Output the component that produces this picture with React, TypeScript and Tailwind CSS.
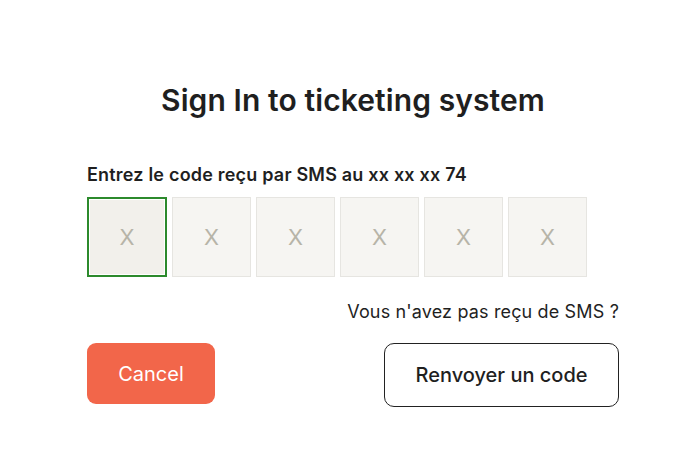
const digits = ['X', 'X', 'X', 'X', 'X', 'X'];

export default function App() {
  return (
    <div
      className="min-h-[476px] w-[695px] bg-white text-[#1f1f1f]"
      style={{ fontFamily: 'Inter, "Noto Sans", sans-serif' }}
    >
      <div className="ml-[87px] w-[532px] pt-[80px]">
        <h1 className="text-center text-[30px] font-semibold leading-[40px] tracking-[0.1px]">
          Sign In to ticketing system
        </h1>

        <p className="mt-[43px] text-[18px] font-semibold leading-[24px] tracking-[0.2px]">
          Entrez le code reçu par SMS au xx xx xx 74
        </p>

        <div className="mt-[10px] flex gap-[5px]">
          {digits.map((d, i) => (
            <div
              key={i}
              className={
                i === 0
                  ? 'flex h-[80px] w-[80px] items-center justify-center border-2 border-[#2c8a2c] bg-[#f2f0eb] text-[22px] text-[#b7b4a8] shadow-[inset_0_0_0_1px_#ffffff]'
                  : 'flex h-[80px] w-[79px] items-center justify-center border border-[#e6e5e1] bg-[#f6f5f2] text-[22px] text-[#b7b4a8]'
              }
            >
              {d}
            </div>
          ))}
        </div>

        <p className="mt-[23px] text-right text-[18px] leading-[24px] tracking-[0.15px]">
          Vous n'avez pas reçu de SMS ?
        </p>

        <div className="mt-[19px] flex items-start justify-between">
          <button className="h-[61px] w-[128px] rounded-[9px] bg-[#f2664a] text-[20px] text-white">
            Cancel
          </button>
          <button className="h-[64px] w-[235px] rounded-[10px] border-[1.5px] border-[#222] bg-white text-[20px] font-medium text-[#1f1f1f]">
            Renvoyer un code
          </button>
        </div>
      </div>
    </div>
  );
}
